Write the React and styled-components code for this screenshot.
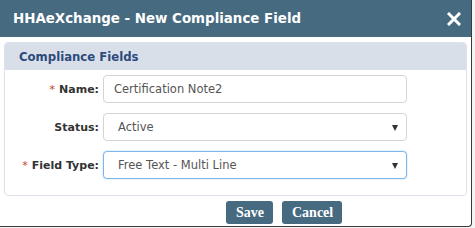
import React from 'react'
import styled, { createGlobalStyle } from 'styled-components'

const GlobalStyle = createGlobalStyle`
  html, body {
    margin: 0;
    padding: 0;
    background: #f4f4f4;
    font-family: "DejaVu Sans", Verdana, sans-serif;
  }
`

const Dialog = styled.div`
  width: 471px;
  height: 226px;
  background: #fff;
  border-right: 1px solid #3a3a3a;
  border-bottom: 1px solid #3a3a3a;
  border-bottom-right-radius: 4px;
  display: flex;
  flex-direction: column;
  overflow: hidden;
`

const TitleBar = styled.div`
  height: 37px;
  background: #466a80;
  display: flex;
  align-items: center;
  justify-content: space-between;
  padding: 0 10px 0 13px;
  color: #fff;
  flex-shrink: 0;
`

const Title = styled.div`
  font-size: 13.4px;
  font-weight: bold;
`

const CloseIcon = styled.svg`
  width: 14px;
  height: 14px;
  margin-top: 1px;
`

const Panel = styled.div`
  margin: 5px 4px 0 4px;
  border: 1px solid #dde2ea;
  border-radius: 4px;
  height: 152px;
  display: flex;
  flex-direction: column;
`

const PanelHead = styled.div`
  height: 27px;
  background: #d9dfe9;
  display: flex;
  align-items: center;
  padding-left: 14px;
  font-size: 11.7px;
  font-weight: bold;
  color: #2c4a7c;
  border-radius: 3px 3px 0 0;
`

const Form = styled.div`
  display: flex;
  flex-direction: column;
  gap: 10px;
  padding-top: 5px;
`

const Row = styled.div`
  display: grid;
  grid-template-columns: 94px 304px;
  column-gap: 4px;
  align-items: center;
`

const Label = styled.label`
  text-align: right;
  font-size: 11px;
  font-weight: bold;
  color: #333;
`

const Star = styled.span`
  color: #c0392b;
  font-weight: normal;
  margin-right: 4px;
`

const Input = styled.input`
  box-sizing: border-box;
  height: 28px;
  width: 100%;
  border: 1px solid ${p => (p.$focus ? '#7fb6ea' : '#d4d4d4')};
  box-shadow: ${p => (p.$focus ? '0 0 2px #a8d0f5' : 'none')};
  border-radius: 4px;
  padding: 0 10px;
  font-family: "DejaVu Sans", Verdana, sans-serif;
  font-size: 11.5px;
  color: #555;
  outline: none;
`

const SelectWrap = styled.div`
  position: relative;
  &::after {
    content: '';
    position: absolute;
    right: 9px;
    top: 12px;
    border-left: 3.5px solid transparent;
    border-right: 3.5px solid transparent;
    border-top: 6px solid #333;
  }
`

const Select = styled(Input).attrs({ as: 'select' })`
  appearance: none;
  -webkit-appearance: none;
  background: #fff;
  padding: 0 14px;
`

const Footer = styled.div`
  display: flex;
  gap: 9px;
  padding-left: 226px;
  padding-top: 5px;
`

const Button = styled.button`
  height: 23px;
  padding: 0 9px 0 10px;
  background: #466a80;
  color: #fff;
  border: none;
  border-radius: 3px;
  font-family: "Liberation Serif", "Times New Roman", serif;
  font-size: 14px;
  font-weight: bold;
`

const fields = [
  { label: 'Name:', required: true, kind: 'input', value: 'Certification Note2' },
  { label: 'Status:', required: false, kind: 'select', value: 'Active' },
  { label: 'Field Type:', required: true, kind: 'select', value: 'Free Text - Multi Line', focus: true },
]

export default function App() {
  return (
    <>
      <GlobalStyle />
      <Dialog>
        <TitleBar>
          <Title>HHAeXchange - New Compliance Field</Title>
          <CloseIcon viewBox="0 0 14 14">
            <path d="M2 2 L12 12 M12 2 L2 12" stroke="#fff" strokeWidth="3" strokeLinecap="square" />
          </CloseIcon>
        </TitleBar>
        <Panel>
          <PanelHead>Compliance Fields</PanelHead>
          <Form>
            {fields.map(f => (
              <Row key={f.label}>
                <Label>
                  {f.required && <Star>*</Star>}
                  {f.label}
                </Label>
                {f.kind === 'input' ? (
                  <Input defaultValue={f.value} />
                ) : (
                  <SelectWrap>
                    <Select $focus={f.focus} defaultValue={f.value}>
                      <option>{f.value}</option>
                    </Select>
                  </SelectWrap>
                )}
              </Row>
            ))}
          </Form>
        </Panel>
        <Footer>
          <Button>Save</Button>
          <Button>Cancel</Button>
        </Footer>
      </Dialog>
    </>
  )
}
